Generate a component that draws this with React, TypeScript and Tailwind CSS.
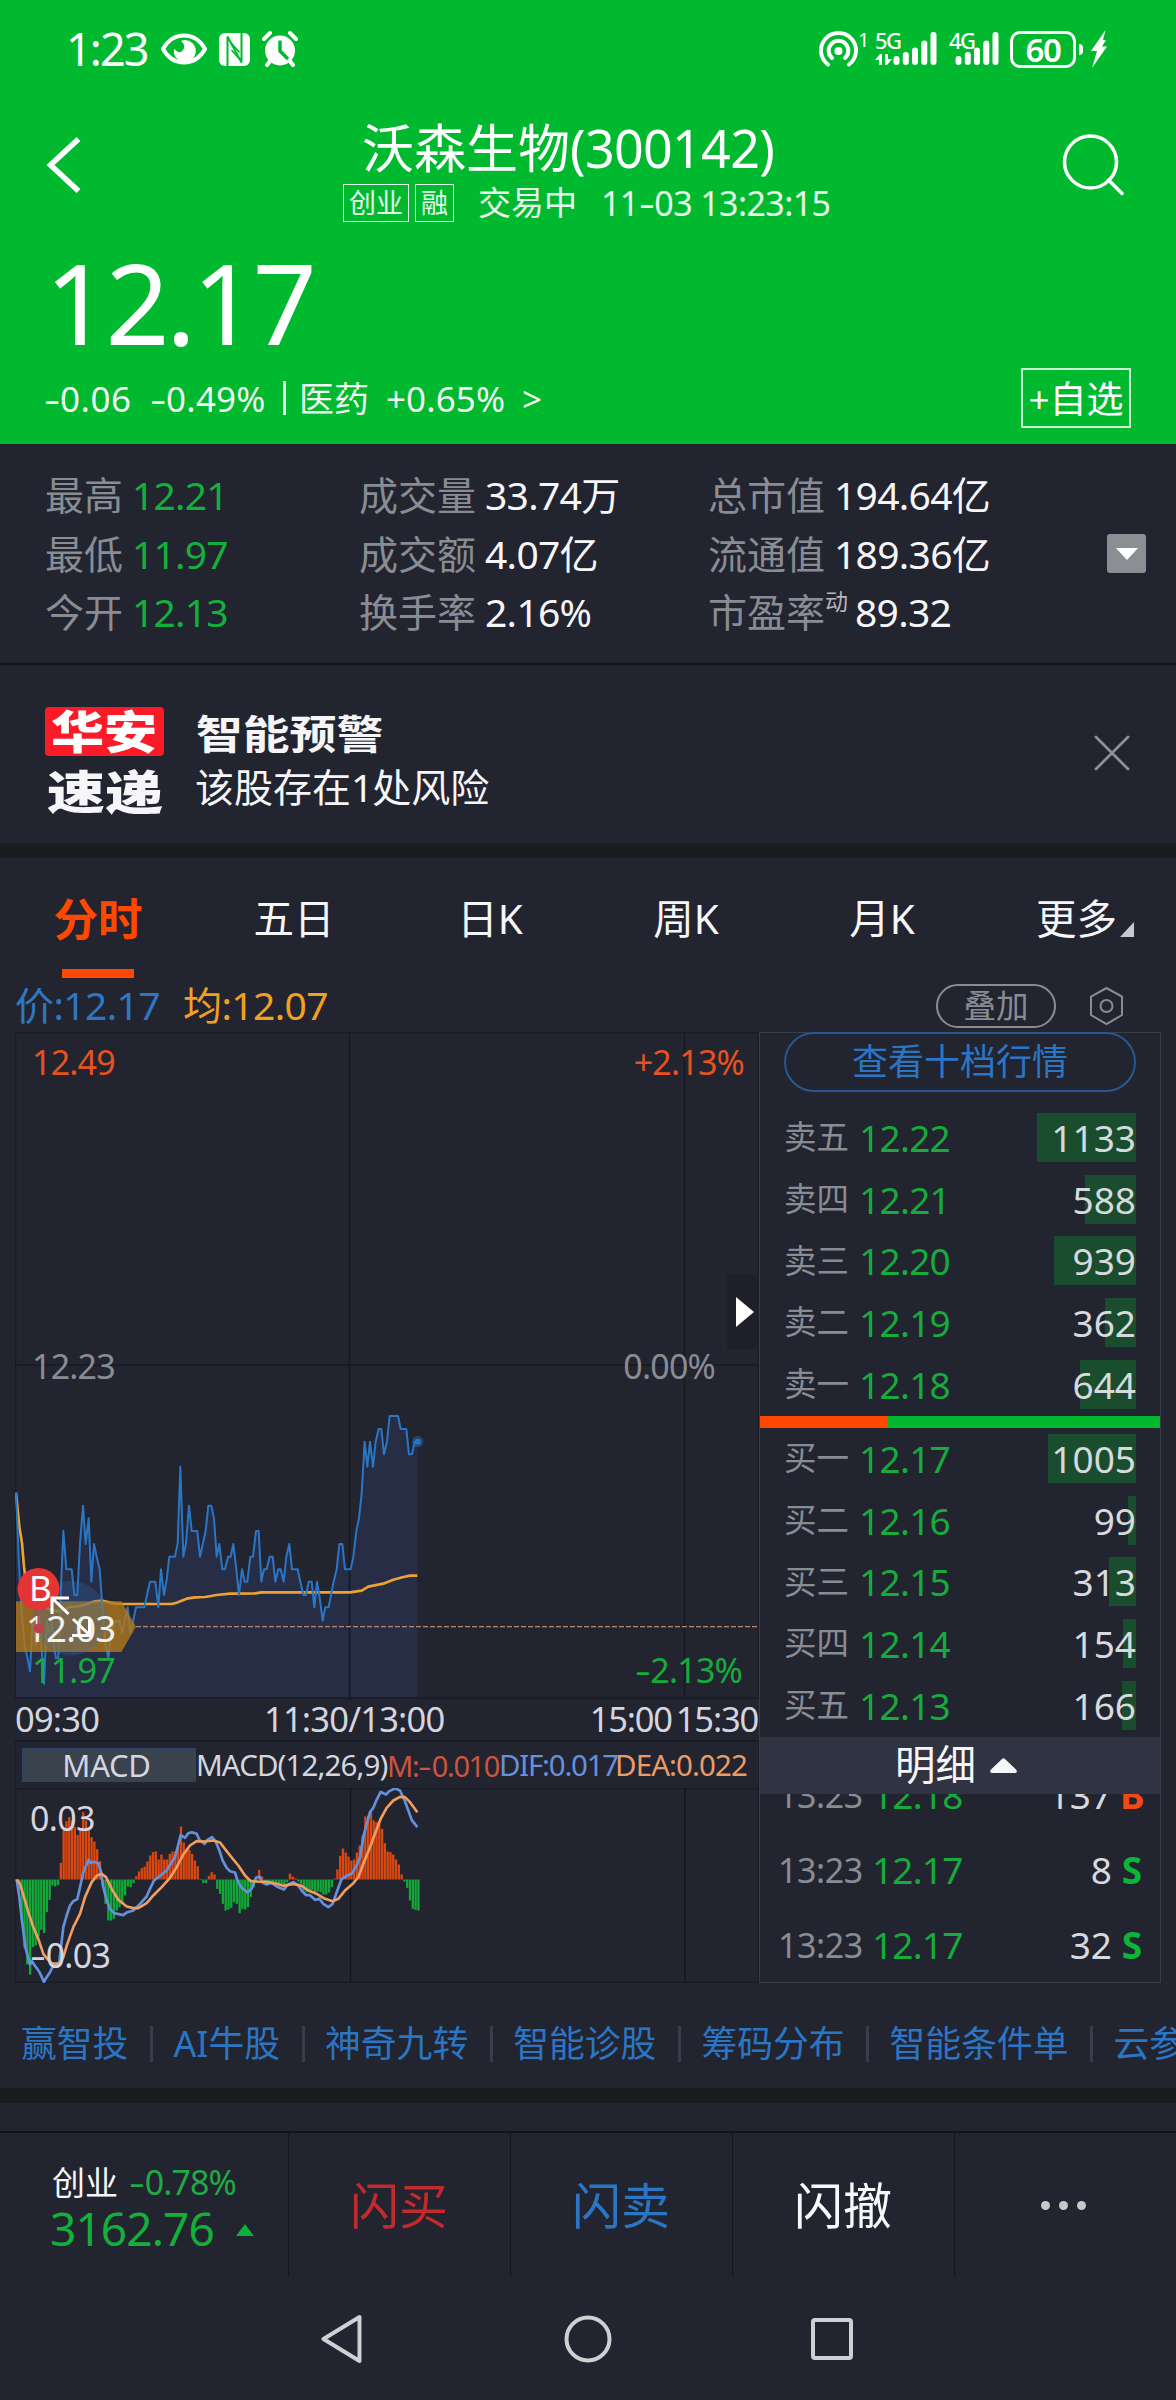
import React from "react";

const GRAY = "text-[#8a8c94]";

const priceLine =
  "48,488 52,580 56,680 62,800 68,880 74,945 82,983 90,1024 98,870 104,905 108,945 114,870 118,850 124,945 132,1062 140,870 148,910 156,870 162,945 168,985 175,985 182,795 190,603 199,718 215,718 223,795 232,795 240,640 249,527 257,642 266,565 274,755 282,642 290,680 299,718 307,830 316,940 325,985 333,910 341,880 350,872 358,872 366,910 374,870 383,832 391,910 400,870 408,832 433,832 441,795 450,755 466,755 475,832 483,718 492,795 500,750 508,680 525,680 533,640 541,410 550,680 558,640 567,527 575,603 592,603 600,680 617,603 625,527 634,527 642,565 650,680 658,642 667,718 675,718 684,680 692,680 700,642 709,718 717,795 726,718 734,755 742,755 751,680 759,680 768,603 776,603 784,755 792,718 800,718 809,680 818,680 826,755 835,718 842,718 851,755 859,680 868,642 876,718 893,718 901,755 910,795 918,795 926,755 935,755 943,832 951,755 960,810 968,872 976,832 986,832 993,795 1001,755 1010,718 1018,642 1027,642 1035,718 1052,718 1060,680 1069,603 1077,565 1085,490 1094,335 1102,410 1110,335 1119,410 1127,335 1136,297 1144,297 1152,373 1161,335 1169,258 1194,258 1202,297 1219,297 1227,373 1236,373 1244,335 1252,335";

const averageLine =
  "48,488 58,590 66,640 72,710 78,760 90,790 110,810 130,828 150,838 175,844 195,838 210,831 240,828 260,822 280,815 305,812 325,816 345,821 370,822 515,822 530,818 545,812 560,806 585,802 615,801 650,795 690,791 765,790 785,787 1050,787 1085,782 1105,770 1150,761 1180,749 1210,741 1230,737 1252,737";

const difLine =
  "50,567 58,620 66,690 76,770 90,822 96,812 104,825 112,835 120,848 132,874 140,860 150,845 160,825 178,815 183,770 190,710 200,675 210,645 220,632 232,626 240,590 250,545 266,508 272,518 282,514 295,518 302,540 310,590 320,630 330,655 342,668 370,674 380,666 400,660 420,640 440,618 450,595 462,570 485,552 500,540 512,520 525,500 533,470 542,434 555,442 565,428 575,425 590,430 598,448 614,460 622,448 636,440 648,455 658,480 668,510 680,532 690,542 705,546 713,572 725,592 742,606 755,595 768,562 778,558 788,576 800,582 815,577 830,588 852,597 864,582 880,575 895,585 905,600 918,614 930,614 945,628 958,625 970,640 985,650 998,640 1012,600 1025,565 1040,556 1055,550 1070,525 1080,500 1090,440 1100,400 1110,365 1120,352 1130,328 1142,304 1158,312 1168,302 1185,294 1200,300 1212,325 1225,360 1235,388 1252,410";

const deaLine =
  "50,567 60,580 72,620 85,665 100,710 115,745 130,790 142,805 155,818 178,822 190,800 202,760 220,710 240,670 255,620 275,575 290,556 305,550 318,560 335,595 355,628 380,648 400,653 415,653 440,638 460,615 485,590 510,562 530,530 550,492 570,465 590,452 615,453 640,450 660,456 680,482 700,507 715,525 735,555 752,572 770,573 800,574 830,580 850,586 880,580 905,586 925,600 950,610 975,625 998,632 1015,625 1035,600 1060,578 1075,560 1090,520 1110,470 1125,430 1142,385 1160,352 1180,330 1200,319 1215,320 1230,335 1252,365";

const macdBars = [
  570, 600, 692, 772, 822, 852, 770, 765, 738, 718, 728, 665, 628, 585, 588, 583, 517, 420, 392, 380, 390, 410, 433, 420, 365, 390,
  415, 440, 453, 476, 512, 590, 640, 690, 690, 685, 660, 650, 640, 615, 588, 590, 578, 557, 543, 533, 528, 513, 495, 485, 483, 507,
  492, 507, 507, 490, 483, 483, 470, 408, 456, 478, 478, 490, 510, 527, 565, 578, 578, 556, 545, 552, 595, 610, 640, 660, 657, 652,
  635, 640, 668, 655, 657, 650, 620, 590, 575, 538, 558, 575, 578, 580, 576, 580, 582, 583, 583, 575, 549, 558, 563, 573, 580, 600,
  605, 600, 598, 610, 603, 605, 612, 612, 606, 590, 564, 537, 496, 474, 486, 498, 510, 507, 486, 465, 436, 378, 376, 365, 390, 395,
  398, 415, 458, 483, 485, 492, 507, 522, 552, 573, 592, 630, 655, 658, 660,
];

const asks = [
  { label: "卖五", price: "12.22", volume: "1133", bar: 99 },
  { label: "卖四", price: "12.21", volume: "588", bar: 51 },
  { label: "卖三", price: "12.20", volume: "939", bar: 82 },
  { label: "卖二", price: "12.19", volume: "362", bar: 31 },
  { label: "卖一", price: "12.18", volume: "644", bar: 56 },
];

const bids = [
  { label: "买一", price: "12.17", volume: "1005", bar: 88 },
  { label: "买二", price: "12.16", volume: "99", bar: 8 },
  { label: "买三", price: "12.15", volume: "313", bar: 27 },
  { label: "买四", price: "12.14", volume: "154", bar: 13 },
  { label: "买五", price: "12.13", volume: "166", bar: 14 },
];

const trades = [
  { time: "13:23", price: "12.18", volume: "137", side: "B" },
  { time: "13:23", price: "12.17", volume: "8", side: "S" },
  { time: "13:23", price: "12.17", volume: "32", side: "S" },
];

// A hyphen widened to the width of the minus sign used in quotes.
function Dash() {
  return <span className="inline-block w-[0.460em] origin-left scale-x-[1.450] tracking-normal">-</span>;
}

function SignalBars() {
  return (
    <svg width="44" height="36" viewBox="0 0 44 36" fill="none" stroke="white" strokeWidth="6" strokeLinecap="round">
      <path d="M3.500 28v3M12.800 24v7M22 19.500v11.500M31.300 12.500v18.500M40.500 4v27" />
    </svg>
  );
}

function StatusBar() {
  return (
    <div className="flex h-[98px] items-center pl-[66px] pr-[69px] text-white">
      <span className="w-[95px] text-[45px] tracking-[-1.900px]">1:23</span>
      <svg width="46" height="32" viewBox="0 0 46 32" fill="none">
        <path d="M2 16C12-2 34-2 44 16C34 34 12 34 2 16Z" stroke="white" strokeWidth="4" />
        <path d="M23 7a11 11 0 1 1-10 9l4 3a5 5 0 0 0 6-4c1-3-1-5-3-7Z" fill="white" />
      </svg>
      <svg className="ml-[12px]" width="31" height="33" viewBox="0 0 31 33" fill="none">
        <rect width="31" height="33" rx="6" fill="white" />
        <path d="M8.500 33V3.500L22.500 29.500V0" stroke="#00b92f" strokeWidth="2" />
        <path d="M12.500 17l8 9M12.500 10.500l8 9" stroke="#00b92f" strokeWidth="1.800" />
      </svg>
      <svg className="ml-[12px]" width="36" height="36" viewBox="0 0 36 36" fill="none">
        <circle cx="18" cy="19.500" r="15" fill="white" />
        <path d="M2 8l6-6M34 8l-6-6M5 34l4-5M31 34l-4-5" stroke="white" strokeWidth="4" strokeLinecap="round" />
        <path d="M18 11v9l7 7" stroke="#00b92f" strokeWidth="3.500" strokeLinecap="round" />
      </svg>
      <div className="ml-auto flex items-center">
        <svg width="39" height="36" viewBox="0 0 39 36" fill="none" stroke="white" strokeWidth="4" strokeLinecap="round">
          <circle cx="19.500" cy="20" r="4" fill="white" stroke="none" />
          <path d="M9 33.500a17.500 17.500 0 1 1 21 0" />
          <path d="M13 27a9.800 9.800 0 1 1 13 0" />
        </svg>
        <span className="mb-[18px] w-[17px] text-[20px] leading-none">1</span>
        <div className="relative">
          <span className="absolute left-0 top-[-2px] text-[22px] font-medium leading-none tracking-[-1.500px]">5G</span>
          <svg className="absolute bottom-[2px] left-0" width="17" height="11" viewBox="0 0 17 11" fill="white">
            <path d="M0 6 5 0h2v11H4V6ZM17 5l-5 6h-2V0h3v5Z" />
          </svg>
          <div className="ml-[18px]">
            <SignalBars />
          </div>
        </div>
        <div className="relative ml-[12px]">
          <span className="absolute left-0 top-[-2px] text-[22px] font-medium leading-none tracking-[-1.500px]">4G</span>
          <div className="ml-[6px]">
            <SignalBars />
          </div>
        </div>
        <div className="ml-[11px] flex h-[37px] w-[66px] items-center justify-center rounded-[10px] border-[3px] border-white text-[33px] font-semibold leading-none tracking-[-1.500px]">
          60
        </div>
        <div className="ml-[3px] h-[11px] w-[4px] rounded-r bg-white" />
        <svg className="ml-[7px]" width="17" height="38" viewBox="0 0 17 38" fill="white">
          <path d="M15.500 0 1 21h6L2 38 17 16.500h-5L16 10h-3Z" />
        </svg>
      </div>
    </div>
  );
}

function Header() {
  return (
    <header className="h-[444px] bg-[#00b92f] text-white">
      <StatusBar />
      <div className="flex h-[134px] items-start pl-[46px] pr-[52px] pt-[2px]">
        <svg className="mt-[36px]" width="36" height="58" viewBox="0 0 36 58" fill="none">
          <path d="M32.500 3 4.500 29 32.500 55" stroke="white" strokeWidth="5.500" />
        </svg>
        <div className="ml-[261px]">
          <h1 className="ml-[19px] mt-[20px] h-[56px] text-[52px] leading-[56px]">
            沃森生物<span className="tracking-[-0.700px]">(300142)</span>
          </h1>
          <div className="mt-[8px] flex h-[38px] items-center text-[34px] leading-[38px] text-white/90">
            <span className="h-[38px] w-[66px] border border-white/90 text-center text-[27px] leading-[36px]">创业</span>
            <span className="ml-[6px] h-[38px] w-[39px] border border-white/90 text-center text-[27px] leading-[36px]">融</span>
            <span className="ml-[24px] text-[33px]">交易中</span>
            <span className="ml-[24px] tracking-[-0.600px]">
              11
              <Dash />
              03 13:23:15
            </span>
          </div>
        </div>
        <svg className="ml-auto mt-[34px]" width="62" height="64" viewBox="0 0 62 64" fill="none" stroke="white" strokeWidth="3.500" strokeLinecap="round">
          <circle cx="28.500" cy="28" r="26" />
          <path d="M46.500 46 60 59.500" />
        </svg>
      </div>
      <div className="flex h-[136px] items-start pl-[45px] text-[112px] leading-[140px] tracking-[-3.600px]">12.17</div>
      <div className="flex h-[60px] items-center pl-[44px] pr-[45px] text-[35px] leading-none text-white/95">
        <span className="w-[106px] tracking-[0.500px]">
          <Dash />
          0.06
        </span>
        <span className="w-[133px] tracking-[0.200px]">
          <Dash />
          0.49%
        </span>
        <span className="h-[34px] w-[3px] bg-white/90" />
        <span className="ml-[13px] w-[87px]">医药</span>
        <span className="w-[136px] tracking-[0.100px]">+0.65%</span>
        <span>&gt;</span>
        <span className="ml-auto flex h-[60px] w-[110px] items-center justify-center border-2 border-white/80 text-[37px] text-white">+自选</span>
      </div>
    </header>
  );
}

function Stat({ label, value, sup, green }: { label: string; value: string; sup?: string; green?: boolean }) {
  return (
    <div className="flex h-[58.800px] items-center">
      <span className={GRAY}>{label}</span>
      {sup && <span className="-mr-[2px] mb-[21px] text-[23px] leading-none text-[#b4b6bc]">{sup}</span>}
      <span className={green ? "ml-[9px] tracking-[-0.800px] text-[#13b03c]" : "ml-[9px] tracking-[-0.700px] text-[#f6f6f8]"}>{value}</span>
    </div>
  );
}

function Stats() {
  return (
    <section className="flex h-[221px] items-start border-b-2 border-[#10121b] pl-[45px] pr-[30px] pt-[21px] text-[39px] leading-none">
      <div className="w-[314px]">
        <Stat label="最高" value="12.21" green />
        <Stat label="最低" value="11.97" green />
        <Stat label="今开" value="12.13" green />
      </div>
      <div className="w-[349px]">
        <Stat label="成交量" value="33.74万" />
        <Stat label="成交额" value="4.07亿" />
        <Stat label="换手率" value="2.16%" />
      </div>
      <div>
        <Stat label="总市值" value="194.64亿" />
        <Stat label="流通值" value="189.36亿" />
        <Stat label="市盈率" value="89.32" sup="动" />
      </div>
      <div className="ml-auto mt-[69px] flex size-[39px] items-center justify-center rounded-[3px] bg-[#8b8f94]">
        <svg width="22" height="12" viewBox="0 0 22 12" fill="white">
          <path d="M0 0h22L11 12Z" />
        </svg>
      </div>
    </section>
  );
}

function Alert() {
  return (
    <section className="flex h-[178px] items-start pl-[45px] pr-[46px] text-[#f6f6f8]">
      <div className="mt-[42px] w-[119px]">
        <div className="flex h-[49px] items-center justify-center rounded bg-[#fb1a28] text-[45px] font-black leading-none text-white">
          <span className="scale-x-[1.180]">华安</span>
        </div>
        <div className="mt-[10px] flex h-[49px] items-center justify-center text-[46px] font-black leading-none">
          <span className="scale-x-[1.260]">速递</span>
        </div>
      </div>
      <div className="ml-[32px] mt-[41px]">
        <div className="origin-left scale-x-[1.170] text-[40px] font-bold leading-[56px]">智能预警</div>
        <div className="-ml-[1px] text-[39px] leading-[50px]">
          该股存在<span className="tracking-[-1px]">1</span>处风险
        </div>
      </div>
      <svg className="ml-auto mt-[70px]" width="36" height="36" viewBox="0 0 36 36" stroke="#8f9095" strokeWidth="2.800" strokeLinecap="round">
        <path d="M2 2 34 34M34 2 2 34" />
      </svg>
    </section>
  );
}

function Tabs() {
  return (
    <nav className="grid h-[120px] grid-cols-6 text-center text-[40.500px] leading-[121px] text-[#f6f6f8]">
      <div className="flex flex-col items-center font-bold text-[#ff4800]">
        <span className="h-[111px] text-[44.500px]">分时</span>
        <span className="h-[9px] w-[72px] bg-[#ff4800]" />
      </div>
      <span>五日</span>
      <span>日K</span>
      <span>周K</span>
      <span>月K</span>
      <div className="flex items-center justify-center pl-[14px]">
        <span>更多</span>
        <svg className="ml-[3px] mt-[22px]" width="14" height="15" viewBox="0 0 14 15" fill="#c8c9cc">
          <path d="M14 0v15H0Z" />
        </svg>
      </div>
    </nav>
  );
}

function Legend() {
  return (
    <div className="flex h-[54px] items-center pl-[15px] pr-[52px] text-[39px] leading-none">
      <span className="mb-[2px] w-[168px] tracking-[-0.600px] text-[#2e77c3]">价:12.17</span>
      <span className="mb-[2px] tracking-[-0.600px] text-[#f0a022]">均:12.07</span>
      <span className="ml-auto mt-[2px] flex h-[44px] w-[120px] items-center justify-center rounded-full border-2 border-[#8a8c94] text-[32.500px] text-[#8a8c94]">叠加</span>
      <svg className="ml-[33px] mt-[2px]" width="35" height="40" viewBox="0 0 35 40" fill="none" stroke="#8a8c94" strokeWidth="2">
        <path d="M17.500 2 33 10.500v18.500L17.500 38 2 29V10.500Z" />
        <circle cx="17.500" cy="20" r="6" />
      </svg>
    </div>
  );
}

function PriceChart() {
  return (
    <div className="relative h-[667px] text-[34px] leading-[34px] tracking-[-0.800px]">
      <svg className="absolute inset-0" width="744" height="667" viewBox="15 1032 744 667" fill="none">
        <path d="M15.500 1032.500H758.500V1698H15.500Z" stroke="#191b26" strokeWidth="1.500" />
        <g transform="translate(0 1330) scale(0.33333)">
          <polygon points={priceLine + " 1252,1102 48,1102"} fill="#262d45" />
        </g>
        <path d="M349.500 1032V1698M684.500 1032V1698M15 1365H758" stroke="#171923" strokeWidth="1.500" />
        <g transform="translate(0 1330) scale(0.33333)">
          <polyline points={averageLine} stroke="#eea22f" strokeWidth="8" strokeLinejoin="round" />
          <polyline points={priceLine} stroke="#2b76c4" strokeWidth="6" strokeLinejoin="round" />
          <circle cx="1253" cy="335" r="17" fill="#2b76c4" fillOpacity="0.450" />
          <circle cx="1253" cy="335" r="9" fill="#2b76c4" />
          <path d="M408 890H2274" stroke="#b58a74" strokeWidth="4" strokeDasharray="15 6" />
          <path d="M48 814H364L408 890 364 966H48Z" fill="#b47a1b" fillOpacity="0.780" />
          <circle cx="211" cy="865" r="112" fill="#2f6fb8" fillOpacity="0.270" />
        </g>
      </svg>
      <span className="absolute left-[17px] top-[13px] text-[#e65220]">12.49</span>
      <span className="absolute right-[15px] top-[13px] text-[#e65220]">+2.13%</span>
      <span className="absolute left-[17px] top-[317px] text-[#8a8c94]">12.23</span>
      <span className="absolute right-[44px] top-[317px] text-[#8a8c94]">0.00%</span>
      <span className="absolute left-[17px] top-[621px] text-[#16ab3c]">11.97</span>
      <span className="absolute right-[17px] top-[621px] text-[#16ab3c]">
        <Dash />
        2.13%
      </span>
      <span className="absolute left-[11px] top-[579px] text-[36.500px] text-[#eef2f5]">12.03</span>
      <svg className="absolute left-0 top-[530px]" width="100" height="110" viewBox="15 1562 100 110" fill="none">
        <path d="M38.500 1600V1628" stroke="#b8435a" strokeWidth="2" />
        <circle cx="38.500" cy="1628.500" r="5" fill="#c0404c" />
        <circle cx="38.500" cy="1589" r="21" fill="#e53434" />
        <path d="M68.500 1614 52.500 1598.500M52 1614V1598H69M73 1619 89 1634.500M72 1635.500H89.500V1619" stroke="white" strokeWidth="3" />
      </svg>
      <span className="absolute left-[14px] top-[539px] text-[35px] text-white">B</span>
      <div className="absolute right-0 top-[242px] flex h-[75px] w-[32px] items-center bg-[#1e1f28] pl-[9px]">
        <svg width="18" height="30" viewBox="0 0 18 30" fill="white">
          <path d="M0 0 18 15 0 30Z" />
        </svg>
      </div>
    </div>
  );
}

function MacdChart() {
  return (
    <div className="relative h-[195px] text-[34px] leading-[34px] tracking-[-0.700px] text-[#d3d5df]">
      <svg className="absolute inset-0" width="744" height="195" viewBox="15 1787.500 744 195" fill="none">
        <path d="M15.500 1788H758.500V1982H15.500Z" stroke="#191b26" strokeWidth="1.500" />
        <path d="M350.500 1788V1982M685 1788V1982" stroke="#12141c" strokeWidth="1.300" />
        <g transform="translate(0 1690) scale(0.33333)">
          {macdBars.map((y, i) => (
            <rect
              key={i}
              x={45 + i * 8.38}
              y={Math.min(y, 567)}
              width="7"
              height={Math.abs(y - 567)}
              fill={y > 567 ? "#12a836" : "#dc4710"}
            />
          ))}
          <polyline points={difLine} stroke="#6590dc" strokeWidth="8" strokeLinejoin="round" />
          <polyline points={deaLine} stroke="#f09d61" strokeWidth="8" strokeLinejoin="round" />
        </g>
      </svg>
      <span className="absolute left-[15px] top-[13px]">0.03</span>
      <span className="absolute left-[15px] top-[150px]">
        <Dash />
        0.03
      </span>
    </div>
  );
}

function QuoteRow({ label, price, volume, bar }: { label: string; price: string; volume: string; bar: number }) {
  return (
    <div className="flex h-[61.750px] items-center pl-[24px] pr-[24px] text-[37px] leading-none">
      <span className="w-[75px] text-[32.500px] text-[#8a8c94]">{label}</span>
      <span className="tracking-[-0.700px] text-[#16ab3c]">{price}</span>
      <span className="relative ml-auto flex h-[49px] items-center text-[#d6dade]">
        <span className="absolute right-0 top-0 h-[49px] bg-[#1a4d2e]" style={{ width: bar }} />
        <span className="relative">{volume}</span>
      </span>
    </div>
  );
}

function OrderBook() {
  return (
    <aside className="flex h-[951px] w-[402px] flex-col border border-[#3a3c48]">
      <div className="-mt-px ml-[24px] flex h-[60px] w-[352px] shrink-0 items-center justify-center rounded-full border-2 border-[#27588f] text-[36px] leading-none text-[#2b76c4]">
        查看十档行情
      </div>
      <div className="mt-[14.500px] h-[309px] shrink-0">
        {asks.map((row) => (
          <QuoteRow key={row.label} {...row} />
        ))}
      </div>
      <div className="flex h-[12px] shrink-0 bg-[#00b92f]">
        <div className="w-[128px] bg-[#ff4800]" />
      </div>
      <div className="h-[309px] shrink-0">
        {bids.map((row) => (
          <QuoteRow key={row.label} {...row} />
        ))}
      </div>
      <div className="flex h-[57px] shrink-0 items-center justify-center bg-[#303341] pr-[8px] text-[40.500px] leading-none text-[#f6f6f8]">
        明细
        <svg className="ml-[14px]" width="27" height="15" viewBox="0 0 27 15" fill="#f6f6f8">
          <path d="M12 1q1.500-1.500 3 0l11.500 11q1 3-1.500 3H2q-2.500 0-1.500-3Z" />
        </svg>
      </div>
      <div className="flex min-h-0 flex-1 flex-col justify-end overflow-hidden">
        {trades.map((t, i) => (
          <div key={i} className="flex h-[75px] shrink-0 items-center pl-[18px] pr-[16px] text-[37px] leading-none">
            <span className="w-[94px] text-[34px] tracking-[-0.400px] text-[#8a8c94]">{t.time}</span>
            <span className="tracking-[-0.800px] text-[#16ab3c]">{t.price}</span>
            <span className="ml-auto text-[#d6dade]">{t.volume}</span>
            <span className={t.side === "B" ? "ml-[8px] w-[24px] text-center font-bold text-[#f24a12]" : "ml-[8px] w-[24px] text-center font-bold text-[#0cb437]"}>
              {t.side}
            </span>
          </div>
        ))}
      </div>
    </aside>
  );
}

function ChartArea() {
  return (
    <section className="flex h-[951px] pl-[15px]">
      <div className="flex w-[744px] flex-col">
        <PriceChart />
        <div className="flex h-[41px] items-center pr-[1px] text-[34.500px] leading-none tracking-[-0.800px] text-[#d3d5df]">
          <span className="w-[249px]">09:30</span>
          <span>11:30/13:00</span>
          <span className="ml-auto tracking-[-1.200px]">15:00</span>
          <span className="ml-[4px] tracking-[-1.200px]">15:30</span>
        </div>
        <div className="flex h-[48px] items-center whitespace-nowrap border-x border-t-2 border-[#191b26] pl-[6px] text-[29.500px] leading-none text-[#d3d5df]">
          <span className="flex h-[34px] w-[174px] shrink-0 items-center justify-center border border-[#2d4468] bg-[#3a424e] pr-[5px] text-[31px] tracking-[-0.300px]">MACD</span>
          <span className="w-[191px] shrink-0 tracking-[-0.900px]">MACD(12,26,9)</span>
          <span className="w-[112px] shrink-0 text-[29px] tracking-[-1.350px] text-[#cb553f]">
            M:
            <Dash />
            0.010
          </span>
          <span className="w-[116px] shrink-0 tracking-[-1.250px] text-[#6590dc]">DIF:0.017</span>
          <span className="tracking-[-0.900px] text-[#eb9b64]">DEA:0.022</span>
        </div>
        <MacdChart />
      </div>
      <OrderBook />
    </section>
  );
}

const links = ["赢智投", "AI牛股", "神奇九转", "智能诊股", "筹码分布", "智能条件单", "云参数"];

function LinkStrip() {
  return (
    <div className="flex h-[105px] items-center overflow-hidden whitespace-nowrap pl-[21px] pt-[17px] text-[35.800px] leading-none text-[#2b76c4]">
      {links.map((l, i) => (
        <React.Fragment key={l}>
          {i > 0 && <span className="ml-[21.500px] mr-[20.500px] h-[36px] w-[3px] shrink-0 bg-[#3a3e4a]" />}
          <span className="shrink-0">{l}</span>
        </React.Fragment>
      ))}
    </div>
  );
}

function ActionBar() {
  return (
    <div className="flex h-[146px] border-t-2 border-[#11131a] text-[49px] leading-none">
      <div className="flex h-[144px] w-[289px] flex-col border-r border-[#15171f] pl-[50px] pt-[29px]">
        <div className="flex h-[40px] items-center">
          <span className="ml-[2px] text-[33px] text-[#f6f6f8]">创业</span>
          <span className="ml-[11px] text-[34px] tracking-[-0.900px] text-[#20a945]">
            <Dash />
            0.78%
          </span>
        </div>
        <div className="flex h-[52px] items-center text-[#12b03a]">
          <span className="w-[186px] text-[46px] tracking-[-0.900px]">3162.76</span>
          <svg className="mt-[4px]" width="18" height="12" viewBox="0 0 18 12" fill="#0cb03a">
            <path d="M9 0 18 12H0Z" />
          </svg>
        </div>
      </div>
      <div className="flex h-[144px] w-[222px] items-center justify-center border-r border-[#15171f] pr-[1px] text-[#c22a2c]">闪买</div>
      <div className="flex h-[144px] w-[222px] items-center justify-center border-r border-[#15171f] pr-[1px] text-[#2b76c4]">闪卖</div>
      <div className="flex h-[144px] w-[222px] items-center justify-center border-r border-[#15171f] pr-[1px] text-[#f8f8fa]">闪撤</div>
      <div className="flex h-[144px] flex-1 items-center justify-center gap-[9px] pr-[4px]">
        <span className="size-[9px] rounded-full bg-[#c8c8c8]" />
        <span className="size-[9px] rounded-full bg-[#c8c8c8]" />
        <span className="size-[9px] rounded-full bg-[#c8c8c8]" />
      </div>
    </div>
  );
}

function SystemNav() {
  return (
    <div className="flex h-[123px] items-center pl-[321px] text-[#d0d0d2]">
      <svg width="42" height="50" viewBox="0 0 42 50" fill="none" stroke="currentColor" strokeWidth="4" strokeLinejoin="round">
        <path d="M2.500 25 38.500 3V47Z" />
      </svg>
      <svg className="ml-[201px]" width="48" height="48" viewBox="0 0 48 48" fill="none" stroke="currentColor" strokeWidth="4">
        <circle cx="24" cy="24" r="21.500" />
      </svg>
      <svg className="ml-[198px]" width="44" height="44" viewBox="0 0 44 44" fill="none" stroke="currentColor" strokeWidth="4">
        <rect x="3" y="3" width="38" height="38" rx="2" />
      </svg>
    </div>
  );
}

export default function App() {
  return (
    <div className="h-[2400px] w-[1176px] overflow-hidden bg-[#222430] font-['Noto_Sans','Noto_Sans_CJK_SC',sans-serif]">
      <Header />
      <Stats />
      <Alert />
      <div className="h-[15px] bg-[#1b1c1f]" />
      <Tabs />
      <Legend />
      <ChartArea />
      <LinkStrip />
      <div className="h-[15px] bg-[#1b1c1f]" />
      <div className="h-[28px]" />
      <ActionBar />
      <SystemNav />
    </div>
  );
}
